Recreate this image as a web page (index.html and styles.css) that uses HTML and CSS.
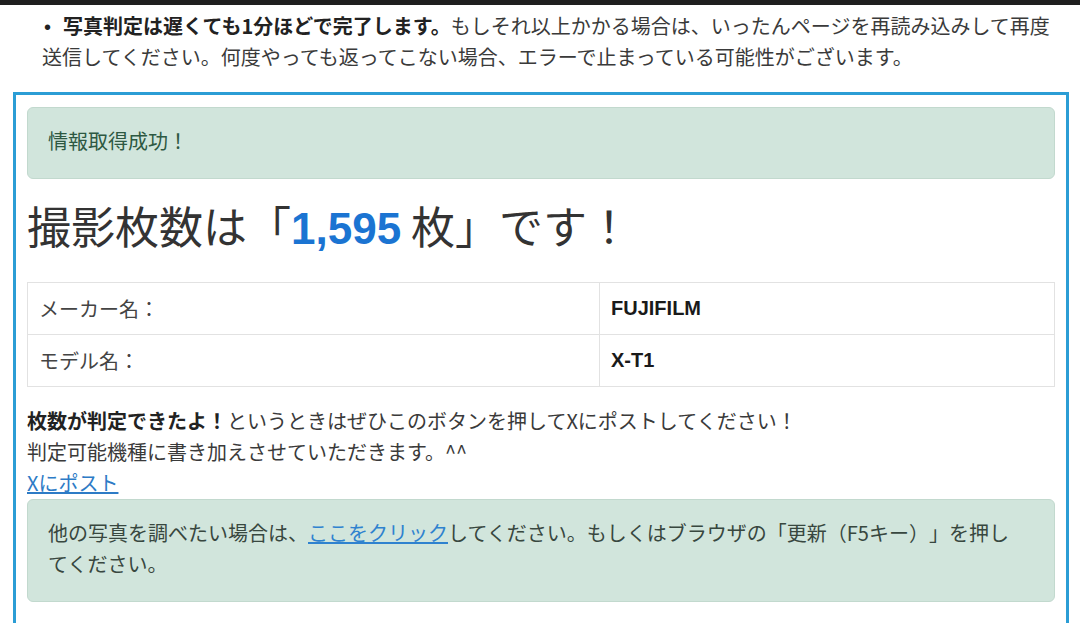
FILE: index.html
```html
<!DOCTYPE html>
<html lang="ja">
<head>
<meta charset="utf-8">
<title>撮影枚数判定</title>
<link rel="stylesheet" href="styles.css">
</head>
<body>
<div class="topbar"></div>
<ul class="notes">
  <li><b>写真判定は遅くても1分ほどで完了します。</b>もしそれ以上かかる場合は、いったんページを再読み込みして再度送信してください。何度やっても返ってこない場合、エラーで止まっている可能性がございます。</li>
</ul>
<section class="result">
  <div class="alert alert-first">情報取得成功！</div>
  <h2 class="count">撮影枚数は「<span class="num">1,595</span> 枚」です！</h2>
  <table class="info">
    <tr><td class="label">メーカー名：</td><td class="val">FUJIFILM</td></tr>
    <tr><td class="label">モデル名：</td><td class="val">X-T1</td></tr>
  </table>
  <p class="share"><b>枚数が判定できたよ！</b>というときはぜひこのボタンを押してXにポストしてください！<br>判定可能機種に書き加えさせていただきます。^^<br><a href="#">Xにポスト</a></p>
  <div class="alert alert-second">他の写真を調べたい場合は、<a href="#">ここをクリック</a>してください。もしくはブラウザの「更新（F5キー）」を押してください。</div>
</section>
</body>
</html>
```

FILE: styles.css
```css
html, body {
  margin: 0;
  padding: 0;
  background: #ffffff;
}
body {
  font-family: "Noto Sans CJK JP", "Liberation Sans", sans-serif;
  font-size: 20px;
  color: #3a3a3a;
  overflow: hidden;
  height: 631px;
  text-spacing-trim: space-all;
  font-feature-settings: normal;
}
b { color: #222; font-weight: 700; }
a { color: #2d7bc6; text-decoration: underline; }

.topbar {
  height: 5px;
  background: #1f1f1f;
}

.notes {
  list-style: none;
  margin: 6px 15px 0 42px;
  padding: 0;
  line-height: 29px;
}
.notes li::before {
  content: "•";
  display: inline-block;
  width: 21px;
  padding-left: 2px;
  box-sizing: border-box;
  font-family: "Liberation Sans", sans-serif;
  color: #222;
}

.result {
  margin: 21px 11px 0 13px;
  border: 3px solid #2b9dd5;
  border-bottom: none;
  padding: 12px 11px 21px 11px;
}

.alert {
  background: #d1e5dc;
  border: 1px solid #c2d9ce;
  border-radius: 6px;
  padding: 17px 20px 22px 20px;
  line-height: 31px;
}
.alert-first { color: #2d5842; }
.alert-second { color: #38473f; margin-top: 1px; padding-right: 34px; }
.alert-second a { color: #2f82cf; }

.count {
  margin: 22px 0 29px 0;
  font-size: 44px;
  font-weight: 400;
  line-height: 48px;
  color: #333;
}
.count .num {
  font-family: "Liberation Sans", sans-serif;
  font-weight: 700;
  color: #1b74d2;
}

.info {
  width: 100%;
  border-collapse: collapse;
  border: 1px solid #e2e2e2;
}
.info td {
  border: 1px solid #e2e2e2;
  padding: 11px 11px;
  line-height: 29px;
}
.info .label {
  width: 55.7%;
  color: #444;
}
.info .val {
  font-family: "Liberation Sans", sans-serif;
  font-weight: 700;
  color: #1a1a1a;
}

.share {
  margin: 18px 0 0 0;
  line-height: 31px;
}
```
